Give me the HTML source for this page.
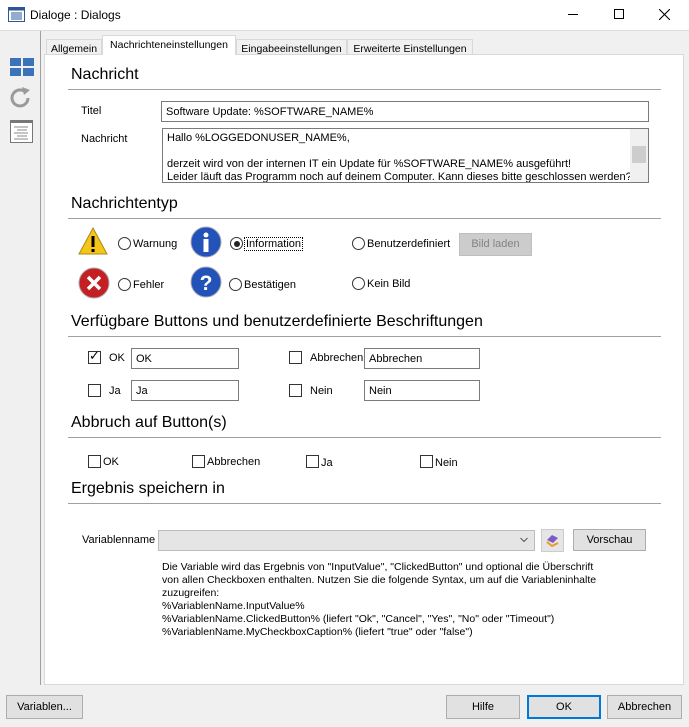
<!DOCTYPE html>
<html><head><meta charset="utf-8"><style>
*{box-sizing:border-box}
body{margin:0;width:689px;height:727px;background:#f0f0f0;font-family:"Liberation Sans",sans-serif;font-size:11px;color:#000;position:relative;overflow:hidden}
.a{position:absolute}
.h{position:absolute;left:71px;font-size:16px;color:#000}
.ln{position:absolute;left:68px;width:593px;height:1px;background:#a0a0a0}
.inp{position:absolute;background:#fff;border:1px solid #7a7a7a;padding:4px 4px 0;font-size:11px;white-space:nowrap;overflow:hidden}
.cb{position:absolute;width:13px;height:13px;border:1px solid #333;background:#fff}
.rb{position:absolute;width:13px;height:13px;border:1px solid #333;border-radius:50%;background:#fff}
.btn{position:absolute;background:#e1e1e1;border:1px solid #adadad;text-align:center;font-size:11px}
.tab{position:absolute;border:1px solid #d9d9d9;border-bottom:none;background:#f0f0f0;padding:3px 0 0;text-align:center;font-size:10.5px;white-space:nowrap}
</style></head><body>
<div class="a" style="left:0;top:0;width:689px;height:31px;background:#fff;border-bottom:1px solid #ddd"></div>
<svg class="a" style="left:8px;top:7px" width="17" height="15"><rect x="0.5" y="0.5" width="16" height="14" fill="#fff" stroke="#2b5797"/><rect x="0.5" y="0.5" width="16" height="3" fill="#2b5797"/><path d="M3 6h11M3 8h11M3 10h11M3 12h11" stroke="#2b5797"/></svg>
<div class="a" style="left:30px;top:8px;font-size:12px">Dialoge : Dialogs</div>
<div class="a" style="left:568px;top:14px;width:10px;height:1px;background:#000"></div>
<div class="a" style="left:614px;top:9px;width:10px;height:10px;border:1px solid #000"></div>
<svg class="a" style="left:659px;top:9px" width="11" height="11"><path d="M0 0L11 11M11 0L0 11" stroke="#000" stroke-width="1.1"/></svg>
<div class="a" style="left:40px;top:31px;width:1px;height:654px;background:#a0a0a0"></div>
<svg class="a" style="left:10px;top:58px" width="24" height="18"><rect x="0" y="0" width="11" height="8" fill="#3b73b9"/><rect x="13" y="0" width="11" height="8" fill="#3b73b9"/><rect x="0" y="10" width="11" height="8" fill="#3b73b9"/><rect x="13" y="10" width="11" height="8" fill="#3b73b9"/></svg>
<svg class="a" style="left:9px;top:86px" width="24" height="24"><path d="M19 12a8 8 0 1 1-4-7" fill="none" stroke="#9a9a9a" stroke-width="3"/><path d="M13 1l8 3-6 5z" fill="#9a9a9a"/></svg>
<svg class="a" style="left:10px;top:120px" width="23" height="23"><rect x="0.5" y="0.5" width="22" height="22" fill="#fff" stroke="#777"/><rect x="0" y="0" width="23" height="3" fill="#777"/><path d="M4 7h14M7 10h10M4 13h14M7 16h10M4 19h14" stroke="#888"/></svg>
<div class="tab" style="left:46px;top:39px;width:56px;height:16px">Allgemein</div>
<div class="tab" style="left:102px;top:35px;width:134px;height:20px;background:#fff;z-index:2;padding-top:3px">Nachrichteneinstellungen</div>
<div class="tab" style="left:236px;top:39px;width:111px;height:16px">Eingabeeinstellungen</div>
<div class="tab" style="left:347px;top:39px;width:126px;height:16px">Erweiterte Einstellungen</div>
<div class="a" style="left:44px;top:54px;width:640px;height:631px;background:#fff;border:1px solid #d9d9d9"></div>
<div class="h" style="top:66px">Nachricht</div><div class="ln" style="top:89px"></div>
<div class="a" style="left:81px;top:105px">Titel</div>
<div class="inp" style="left:161px;top:101px;width:488px;height:21px">Software Update: %SOFTWARE_NAME%</div>
<div class="a" style="left:81px;top:133px">Nachricht</div>
<div class="inp" style="left:162px;top:128px;width:487px;height:55px;line-height:13px;padding-top:3px">Hallo %LOGGEDONUSER_NAME%,<br><br>derzeit wird von der internen IT ein Update für %SOFTWARE_NAME% ausgeführt!<br>Leider läuft das Programm noch auf deinem Computer. Kann dieses bitte geschlossen werden?</div>
<div class="a" style="left:630px;top:129px;width:18px;height:53px;background:#f0f0f0"></div>
<div class="a" style="left:632px;top:146px;width:14px;height:17px;background:#cdcdcd"></div>
<div class="h" style="top:195px">Nachrichtentyp</div><div class="ln" style="top:218px"></div>
<svg class="a" style="left:78px;top:227px" width="30" height="28"><path d="M15 1L29 27H1z" fill="#f5c517" stroke="#a88a1a"/><rect x="13.5" y="9" width="3" height="11" fill="#000"/><rect x="13.5" y="22" width="3" height="3" fill="#000"/></svg>
<div class="rb" style="left:118px;top:237px"></div><div class="a" style="left:133px;top:238px">Warnung</div>
<svg class="a" style="left:190px;top:226px" width="32" height="32"><circle cx="16" cy="16" r="15" fill="#2352b8" stroke="#aab"/><circle cx="16" cy="9" r="2.5" fill="#fff"/><rect x="13.5" y="13" width="5" height="13" fill="#fff"/></svg>
<div class="rb" style="left:230px;top:237px"></div><div class="a" style="left:233.5px;top:240.5px;width:6px;height:6px;border-radius:50%;background:#222"></div>
<div class="a" style="left:244px;top:237px;border:1px dotted #000;padding:0 1px">Information</div>
<div class="rb" style="left:352px;top:237px"></div><div class="a" style="left:367px;top:238px">Benutzerdefiniert</div>
<div class="btn" style="left:459px;top:233px;width:73px;height:23px;background:#ccc;border-color:#bfbfbf;color:#838383;line-height:21px">Bild laden</div>
<svg class="a" style="left:78px;top:267px" width="32" height="32"><circle cx="16" cy="16" r="15" fill="#c41f22" stroke="#aaa"/><path d="M10 10l12 12M22 10L10 22" stroke="#fff" stroke-width="3.5"/></svg>
<div class="rb" style="left:118px;top:278px"></div><div class="a" style="left:133px;top:279px">Fehler</div>
<svg class="a" style="left:190px;top:266px" width="32" height="32"><circle cx="16" cy="16" r="15" fill="#2352b8" stroke="#aab"/><text x="16" y="24" text-anchor="middle" font-size="21" font-weight="bold" fill="#fff" font-family="Liberation Sans">?</text></svg>
<div class="rb" style="left:229px;top:278px"></div><div class="a" style="left:244px;top:279px">Bestätigen</div>
<div class="rb" style="left:352px;top:277px"></div><div class="a" style="left:367px;top:278px">Kein Bild</div>
<div class="h" style="top:313px">Verfügbare Buttons und benutzerdefinierte Beschriftungen</div><div class="ln" style="top:336px"></div>
<div class="cb" style="left:88px;top:351px"></div><div class="a" style="left:89px;top:348px;font-size:13px">✓</div><div class="a" style="left:109px;top:352px">OK</div>
<div class="inp" style="left:131px;top:348px;width:108px;height:21px">OK</div>
<div class="cb" style="left:289px;top:351px"></div><div class="a" style="left:310px;top:352px">Abbrechen</div>
<div class="inp" style="left:364px;top:348px;width:116px;height:21px">Abbrechen</div>
<div class="cb" style="left:88px;top:384px"></div><div class="a" style="left:109px;top:385px">Ja</div>
<div class="inp" style="left:131px;top:380px;width:108px;height:21px">Ja</div>
<div class="cb" style="left:289px;top:384px"></div><div class="a" style="left:310px;top:385px">Nein</div>
<div class="inp" style="left:364px;top:380px;width:116px;height:21px">Nein</div>
<div class="h" style="top:414px">Abbruch auf Button(s)</div><div class="ln" style="top:437px"></div>
<div class="cb" style="left:88px;top:455px"></div><div class="a" style="left:103px;top:456px">OK</div>
<div class="cb" style="left:192px;top:455px"></div><div class="a" style="left:207px;top:456px">Abbrechen</div>
<div class="cb" style="left:306px;top:455px"></div><div class="a" style="left:321px;top:457px">Ja</div>
<div class="cb" style="left:420px;top:455px"></div><div class="a" style="left:435px;top:457px">Nein</div>
<div class="h" style="top:480px">Ergebnis speichern in</div><div class="ln" style="top:503px"></div>
<div class="a" style="left:82px;top:534px">Variablenname</div>
<div class="a" style="left:158px;top:530px;width:377px;height:21px;background:#e5e5e5;border:1px solid #bcbcbc"></div>
<svg class="a" style="left:520px;top:537px" width="8" height="6"><path d="M0.5 1l3.5 3.5L7.5 1" fill="none" stroke="#555"/></svg>
<div class="a" style="left:541px;top:529px;width:23px;height:23px;background:#e5e5e5;border:1px solid #ccc"></div>
<svg class="a" style="left:544px;top:532px" width="17" height="17"><path d="M3 8l5-5 6 3-5 5z" fill="#7b5bc4"/><path d="M3 10l5 4 6-3" fill="none" stroke="#e59a2a" stroke-width="2"/></svg>
<div class="btn" style="left:573px;top:529px;width:73px;height:22px;line-height:20px">Vorschau</div>
<div class="a" style="left:162px;top:561px;line-height:13px;width:480px;font-size:10.5px">Die Variable wird das Ergebnis von "InputValue", "ClickedButton" und optional die Überschrift<br>von allen Checkboxen enthalten. Nutzen Sie die folgende Syntax, um auf die Variableninhalte<br>zuzugreifen:<br>%VariablenName.InputValue%<br>%VariablenName.ClickedButton% (liefert "Ok", "Cancel", "Yes", "No" oder "Timeout")<br>%VariablenName.MyCheckboxCaption% (liefert "true" oder "false")</div>
<div class="btn" style="left:6px;top:695px;width:77px;height:24px;line-height:22px">Variablen...</div>
<div class="btn" style="left:446px;top:695px;width:74px;height:24px;line-height:22px">Hilfe</div>
<div class="btn" style="left:527px;top:695px;width:74px;height:24px;line-height:20px;border:2px solid #0078d7">OK</div>
<div class="btn" style="left:607px;top:695px;width:75px;height:24px;line-height:22px">Abbrechen</div>
</body></html>
